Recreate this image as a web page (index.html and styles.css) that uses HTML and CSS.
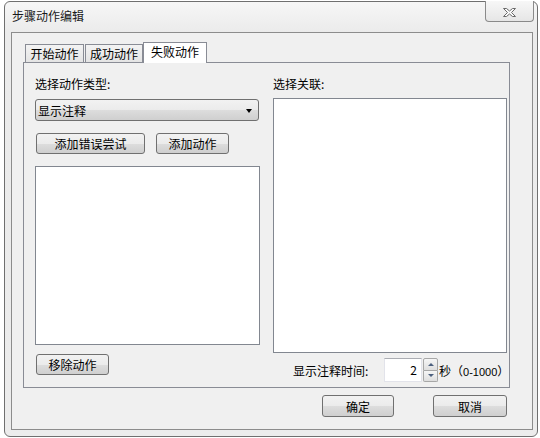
FILE: index.html
```html
<!DOCTYPE html>
<html>
<head>
<meta charset="utf-8">
<link rel="stylesheet" href="styles.css">
</head>
<body>
<div class="window">
  <div class="titlebar">
    <span class="title">步骤动作编辑</span>
    <div class="close">
      <svg width="13" height="9" viewBox="0 0 13 9"><path d="M0.5 0.5h3l3 2.5 3-2.5h3l-4 4 4 4h-3l-3-2.5-3 2.5h-3l4-4z" fill="#fafafa" stroke="#6a6a6a" stroke-width="1" stroke-linejoin="round"/></svg>
    </div>
  </div>
  <div class="client">
    <div class="tabctl">
      <div class="tabstrip">
        <div class="tab t1">开始动作</div>
        <div class="tab t2">成功动作</div>
        <div class="tab active">失败动作</div>
      </div>
      <div class="panel">
        <div class="col">
          <div class="label">选择动作类型:</div>
          <div class="select"><span>显示注释</span><span class="arrow"></span></div>
          <div class="btnrow">
            <div class="btn wide">添加错误尝试</div>
            <div class="btn">添加动作</div>
          </div>
          <div class="list list-left"></div>
          <div class="btn remove">移除动作</div>
        </div>
        <div class="col">
          <div class="label">选择关联:</div>
          <div class="list list-right"></div>
          <div class="timerow">
            <span class="tlabel">显示注释时间:</span>
            <div class="num">2</div>
            <div class="spin">
              <div class="sb up"><span></span></div>
              <div class="sb down"><span></span></div>
            </div>
            <span class="unit">秒（<span class="small">0-1000</span>）</span>
          </div>
        </div>
      </div>
    </div>
    <div class="footer">
      <div class="btn ok">确定</div>
      <div class="btn cancel">取消</div>
    </div>
  </div>
</div>
</body>
</html>
```
FILE: styles.css
```css
html, body {
  margin: 0;
  background: #ffffff;
}
body {
  font-family: "Noto Sans CJK SC", "Noto Sans", sans-serif;
  font-size: 12px;
  color: #000;
}
.window {
  margin: 1px 0 0 4px;
  width: 534px;
  height: 436px;
  box-sizing: border-box;
  border: 1px solid #6f6f6f;
  border-radius: 6px;
  background: linear-gradient(#f6f6f6, #ebebeb 30px, #ececec);
  padding: 0 4px 6px 6px;
  display: flex;
  flex-direction: column;
}
.titlebar {
  height: 30px;
  display: flex;
  align-items: flex-start;
}
.title {
  margin: 7px 0 0 1px;
  line-height: 14px;
  color: #1a1a1a;
}
.close {
  margin: -1px -1px 0 auto;
  width: 49px;
  height: 21px;
  box-sizing: border-box;
  border: 1px solid #8a8a8a;
  border-top: none;
  border-radius: 0 0 4px 4px;
  background: linear-gradient(#f7f7f7, #e6e6e6);
  display: flex;
  align-items: center;
  justify-content: center;
  padding-top: 2px;
}
.client {
  height: 398px;
  box-sizing: border-box;
  border: 1px solid #8c8c8c;
  background: #f0f0f0;
  display: flex;
  flex-direction: column;
}
.tabctl {
  margin: 9px 0 0 11px;
  width: 487px;
}
.tabstrip {
  display: flex;
  align-items: flex-end;
  height: 20px;
  padding-left: 2px;
  position: relative;
  z-index: 1;
}
.tab {
  height: 18px;
  box-sizing: border-box;
  border: 1px solid #898c95;
  border-bottom: none;
  background: linear-gradient(#f3f3f3, #e4e4e4);
  text-align: center;
  line-height: 17px;
}
.t1 { width: 59px; margin-right: 1px; }
.t2 { width: 58px; }
.tab.active {
  width: 64px;
  height: 21px;
  margin-bottom: -1px;
  background: #ffffff;
  line-height: 18px;
}
.panel {
  height: 326px;
  box-sizing: border-box;
  border: 1px solid #898c95;
  background: #f0f0f0;
  display: grid;
  grid-template-columns: 225px 234px;
  column-gap: 13px;
  align-items: start;
  padding: 14px 0 0 11px;
}
.col {
  display: flex;
  flex-direction: column;
  align-items: flex-start;
}
.label {
  height: 14px;
  line-height: 14px;
}
.select {
  margin-top: 8px;
  width: 224px;
  height: 22px;
  box-sizing: border-box;
  border: 1px solid #707070;
  border-radius: 3px;
  background: linear-gradient(#f2f2f2, #ebebeb 50%, #dddddd 51%, #cfcfcf);
  display: flex;
  align-items: center;
  justify-content: space-between;
  padding: 0 6px 0 2px;
}
.arrow {
  width: 0;
  height: 0;
  border-left: 3.5px solid transparent;
  border-right: 3.5px solid transparent;
  border-top: 4px solid #000;
  margin-top: 1px;
}
.btnrow {
  margin-top: 12px;
  margin-left: 1px;
  display: flex;
  gap: 11px;
}
.btn {
  height: 21px;
  box-sizing: border-box;
  border: 1px solid #707070;
  border-radius: 3px;
  background: linear-gradient(#f2f2f2, #ebebeb 50%, #dddddd 51%, #cfcfcf);
  display: flex;
  align-items: center;
  justify-content: center;
  width: 73px;
}
.btn.wide { width: 109px; }
.list {
  box-sizing: border-box;
  border: 1px solid #828790;
  background: #ffffff;
}
.list-left {
  margin-top: 12px;
  width: 225px;
  height: 179px;
}
.remove {
  margin-top: 9px;
  margin-left: 1px;
}
.list-right {
  margin-top: 7px;
  width: 234px;
  height: 255px;
}
.timerow {
  margin-top: 5px;
  padding-left: 20px;
  height: 24px;
  display: flex;
  align-items: center;
}
.tlabel {
  width: 91px;
}
.num {
  width: 38px;
  height: 24px;
  box-sizing: border-box;
  border: 1px solid #e2e3ea;
  border-top-color: #abadb3;
  background: #ffffff;
  text-align: right;
  line-height: 21px;
  padding-right: 4px;
}
.spin {
  margin-left: 1px;
  width: 15px;
  height: 24px;
  display: flex;
  flex-direction: column;
}
.sb {
  flex: 1;
  box-sizing: border-box;
  border: 1px solid #a7a7a7;
  background: linear-gradient(#f6f6f6, #dedede);
  display: flex;
  align-items: center;
  justify-content: center;
}
.sb.up { border-radius: 2px 2px 0 0; }
.sb.down { border-radius: 0 0 2px 2px; border-top: none; }
.sb span {
  width: 0;
  height: 0;
  border-left: 3px solid transparent;
  border-right: 3px solid transparent;
}
.sb.up span { border-bottom: 3px solid #4c607f; }
.sb.down span { border-top: 3px solid #4c607f; }
.unit {
  margin-left: 1px;
  white-space: nowrap;
}
.small {
  font-family: "Liberation Sans", sans-serif;
  font-size: 11px;
}
.footer {
  margin-top: 7px;
  display: flex;
  justify-content: flex-end;
  padding-right: 25px;
  gap: 39px;
}
.footer .btn { height: 22px; }
.ok { width: 72px; }
.cancel { width: 74px; }
```
